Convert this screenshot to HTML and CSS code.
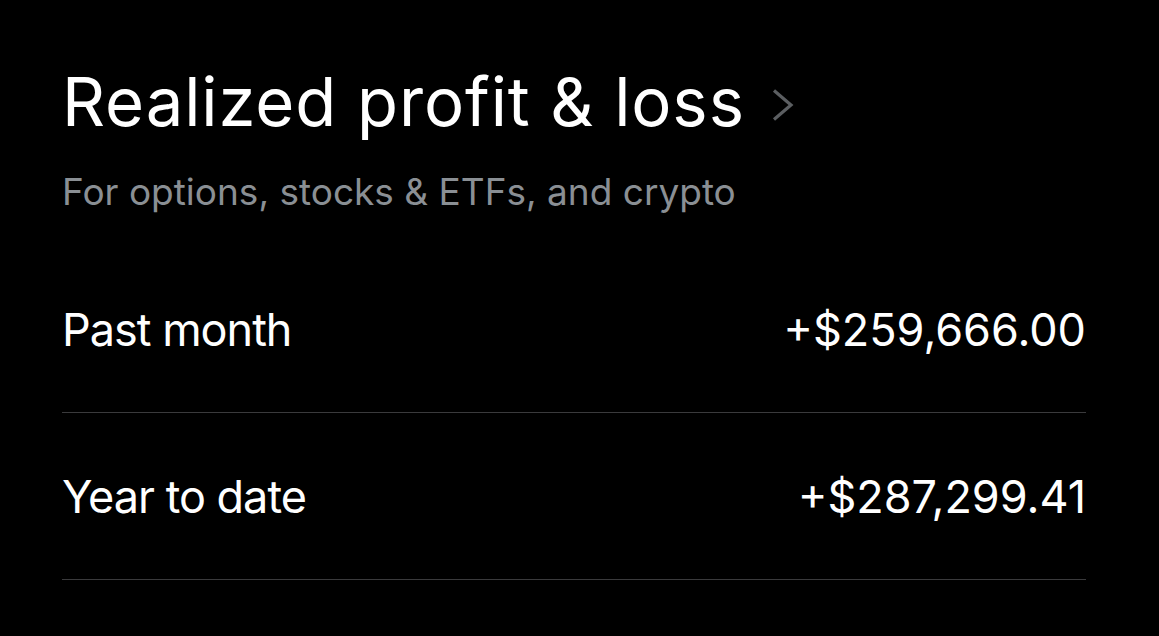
FILE: index.html
```html
<!DOCTYPE html>
<html>
<head>
    <meta charset="utf-8">
    <title>Realized profit &amp; loss</title>
    <link rel="stylesheet" href="styles.css">
</head>
<body>
    <div class="panel">
        <div class="title-row">
            <h1 class="title">Realized profit &amp; loss</h1>
            <svg class="chevron" width="24" height="34" viewBox="0 0 24 34">
                <path d="M3 2.5 L20 17 L3 31.5" fill="none" stroke="#5b5e61" stroke-width="3.2"/>
            </svg>
        </div>
        <p class="subtitle">For options, stocks &amp; ETFs, and crypto</p>

        <div class="row">
            <span class="label">Past month</span>
            <span class="value">+$259,666.00</span>
        </div>
        <div class="row">
            <span class="label">Year to date</span>
            <span class="value">+$287,299.41</span>
        </div>
    </div>
</body>
</html>
```

FILE: styles.css
```css
body {
    margin: 0;
    background: #000;
    color: #fff;
    font-family: Inter, "Liberation Sans", sans-serif;
}

.panel {
    width: 1024px;
    padding: 62px 0 0 62px;
}

.title-row {
    display: flex;
    align-items: center;
    gap: 26px;
}
.title {
    margin: 0;
    font-size: 67px;
    font-weight: 400;
    letter-spacing: 0.9px;
    line-height: 80px;
}
.chevron {
    margin-top: 5px;
}

.subtitle {
    margin: 28px 0 32px;
    font-size: 37px;
    line-height: 44px;
    color: #8a8f94;
}

.row {
    display: flex;
    justify-content: space-between;
    align-items: center;
    height: 166px;
    border-bottom: 1px solid #3a3a3c;
    font-size: 45px;
}
.label {
    letter-spacing: -1px;
}
```
